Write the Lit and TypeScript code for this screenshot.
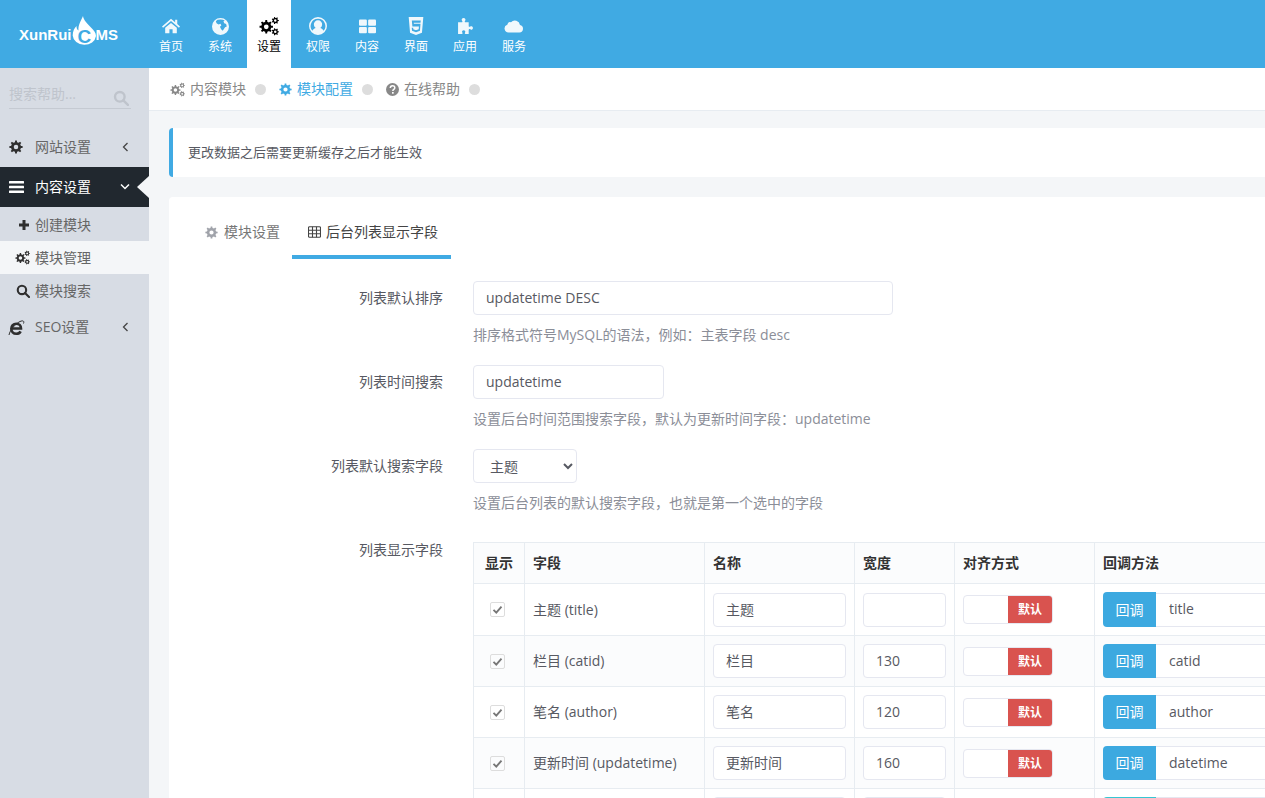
import { LitElement, html, css, svg } from 'lit';
import { customElement } from 'lit/decorators.js';

// builds a toothed wheel, used by the gear and cogs icons
function gear(cx: number, cy: number, R: number, r: number, hole: number, teeth: number) {
  let d = '';
  const step = (Math.PI * 2) / teeth;
  for (let i = 0; i < teeth; i++) {
    const a = i * step;
    const pts = [
      [r, a - step * 0.5],
      [r, a - step * 0.27],
      [R, a - step * 0.17],
      [R, a + step * 0.17],
      [r, a + step * 0.27],
    ];
    for (const [rad, an] of pts) {
      d += `${d ? 'L' : 'M'}${(cx + rad * Math.cos(an)).toFixed(2)} ${(cy + rad * Math.sin(an)).toFixed(2)}`;
    }
  }
  d += `Z M${cx - hole} ${cy}a${hole} ${hole} 0 1 0 ${hole * 2} 0a${hole} ${hole} 0 1 0 ${-hole * 2} 0Z`;
  return d;
}

const icon = (size: number, body: unknown, vb = '0 0 16 16') =>
  html`<svg class="ic" width=${size} height=${size} viewBox=${vb} fill="currentColor" fill-rule="evenodd">${body}</svg>`;

const cogs = (size: number) =>
  icon(size, svg`<path d=${gear(5.8, 8.6, 5.4, 4, 1.9, 8)} /><path d=${gear(13, 3.6, 2.9, 2.1, 1, 7)} /><path d=${gear(13, 12.6, 2.9, 2.1, 1, 7)} />`);
const cog = (size: number) => icon(size, svg`<path d=${gear(8, 8, 7.6, 5.7, 2.6, 8)} />`);

const navIcons: Record<string, () => unknown> = {
  home: () =>
    icon(18, svg`<path d="M8.5 1.6 12.4 5V2.6h2v4.1L17 9l-1 1.1-7.5-6.3L1 10.1 0 9zM3 10.2l5.500-4.600 5.500 4.600V15.400H10V11.500H7v3.900H3z" />`, '0 0 17 17'),
  globe: () =>
    icon(17, svg`<path d="M8 0a8 8 0 1 1 0 16A8 8 0 0 1 8 0zM5.200 1.700 3.600 3.100 4.300 5 6.200 6 8 5.400 8.800 7l-1.300 1.200 1.100 2.400 1.500 1.500L12.300 8.800 13.900 8 13.300 5.600 11.500 5 10.800 3 12 2.400A7 7 0 0 0 8 1.300z" />`),
  cogs: () => cogs(20),
  user: () =>
    icon(18, svg`<path d="M8 0a8 8 0 1 1 0 16A8 8 0 0 1 8 0zm0 1.500a6.500 6.500 0 0 0-5 10.700C3.600 10.700 5 10 6 9.700A3.700 3.700 0 1 1 10 9.700c1 .3 2.400 1 3 2.500A6.500 6.500 0 0 0 8 1.500z" />`),
  grid: () =>
    icon(17, svg`<rect x="0" y="1.500" width="7.400" height="5.800" rx="1" /><rect x="8.600" y="1.500" width="7.400" height="5.800" rx="1" /><rect x="0" y="8.500" width="7.400" height="5.800" rx="1" /><rect x="8.600" y="8.500" width="7.400" height="5.800" rx="1" />`),
  html5: () =>
    icon(18, svg`<path d="M1.500 0h13l-1.200 14L8 16l-5.300-2zM4.300 3l.5 5.400h5.800l-.2 2.500-2.400.8-2.400-.8-.1-1.300H4.200l.3 2.700 3.500 1.200 3.500-1.200.5-6.400H6.100L6 5.100h6l.2-2.100z" />`),
  puzzle: () =>
    icon(17, svg`<path d="M1 4H4.200C5.400 4 5.300 3 4.700 2.500 3.900 1.500 4.700 0 6.200 0S8.500 1.500 7.700 2.500C7.100 3 7 4 8.200 4H11V7.500C11 8.500 12 8.500 12.500 8 13.500 7.200 15 7.900 15 9.300S13.500 11.500 12.500 10.700C12 10.200 11 10.300 11 11.300V15H8C7.200 15 7.200 14.200 7.600 13.700 8.300 12.800 7.500 11.600 6.300 11.600S4.300 12.800 5 13.700C5.400 14.200 5.400 15 4.600 15H1z" />`),
  cloud: () =>
    icon(20, svg`<path d="M4.500 15.500A4 4 0 0 1 3.300 7.700 3 3 0 0 1 7 5.200 5.300 5.300 0 0 1 16 8a3.800 3.800 0 0 1-.5 7.500z" />`, '0 0 20 18'),
};

const nav = [
  ['首页', 'home'],
  ['系统', 'globe'],
  ['设置', 'cogs'],
  ['权限', 'user'],
  ['内容', 'grid'],
  ['界面', 'html5'],
  ['应用', 'puzzle'],
  ['服务', 'cloud'],
];

const searchIc = (size: number) =>
  html`<svg class="ic" width=${size} height=${size} viewBox="0 0 16 16" fill="none" stroke="currentColor" stroke-width="2.400"><circle cx="6.800" cy="6.800" r="4.800" /><path d="m10.300 10.300 4.600 4.600" stroke-linecap="round" /></svg>`;

// last row only shows its top edge in the viewport, so it carries no text
const rows = [
  ['主题 (title)', '主题', '', 'title', ''],
  ['栏目 (catid)', '栏目', '130', 'catid', ''],
  ['笔名 (author)', '笔名', '120', 'author', ''],
  ['更新时间 (updatetime)', '更新时间', '160', 'datetime', ''],
  ['', '', '', '', 'teal'],
];

@customElement('app-root')
export class AppRoot extends LitElement {
  static styles = css`
    :host {
      display: block;
      height: 798px;
      overflow: hidden;
      background: #f4f6f8;
      color: #575962;
      font-family: 'Open Sans', 'Noto Sans CJK SC', sans-serif;
      font-size: 14px;
      line-height: 20px;
    }
    .ic { display: block; flex: none; }
    .top { display: flex; height: 68px; background: #40aae3; color: #fff; }
    .logo {
      width: 149px;
      box-sizing: border-box;
      padding-left: 19px;
      display: flex;
      align-items: center;
      font: bold 15px 'Liberation Sans', Arial, sans-serif;
      color: #fff;
    }
    .logo svg { margin: -7px -1px 0 0; flex: none; }
    .logo text { font: bold 19px 'Liberation Sans', Arial, sans-serif; fill: #40aae3; }
    .nav { display: flex; gap: 5px; }
    .nav a {
      width: 44px;
      display: flex;
      flex-direction: column;
      align-items: center;
      font-size: 12px;
      color: #fff;
    }
    .nav a.on { background: #fff; color: #000; }
    .nav .slot { height: 20px; margin-top: 16px; display: flex; align-items: center; opacity: 0.92; }
    .nav a.on .slot { opacity: 1; }
    .nav .lb { margin-top: 1px; }

    .body { display: flex; height: 730px; }
    .side { width: 149px; flex: none; background: #d7dce4; color: #666; }
    .search {
      margin: 0 18px 0 9px;
      height: 41px;
      box-sizing: border-box;
      border-bottom: 1px solid #c5cad2;
      padding-top: 16px;
      display: flex;
      justify-content: space-between;
      color: #bfc4cc;
    }
    .search .ic { margin: 6px 2px 0 0; }
    .menu { margin-top: 18px; }
    .mi { display: flex; align-items: center; height: 40px; position: relative; }
    .mi .mic { width: 35px; padding-left: 9px; box-sizing: border-box; color: #2f2f2f; flex: none; }
    .mi .chev { position: absolute; left: 122px; top: 15px; }
    .mi .chev.down { top: 16px; left: 120px; }
    .mi .mic.ie { padding-left: 8px; }
    .mi.dark { background: #21282f; color: #fff; margin-bottom: 1px; }
    .mi.dark .mic { color: #fff; }
    .mi.dark::after {
      content: '';
      position: absolute;
      right: 0;
      top: 9px;
      border: 11px solid transparent;
      border-left: 0;
      border-right: 12px solid #f4f6f8;
    }
    .sub { display: flex; align-items: center; height: 33px; }
    .sub .mic { width: 35px; flex: none; display: flex; justify-content: flex-end; padding-right: 5px; box-sizing: border-box; color: #2f2f2f; }
    .sub.on { background: #f4f6f8; }

    .main { flex: 1; min-width: 0; overflow: hidden; }
    .crumbs {
      height: 42px;
      background: #fff;
      border-bottom: 1px solid #e7ecf1;
      display: flex;
      align-items: center;
      padding-left: 21px;
      color: #888;
    }
    .crumbs .it { display: flex; align-items: center; gap: 5px; }
    .crumbs .it.on { color: #40aae3; }
    .crumbs .dot { width: 11px; height: 11px; border-radius: 50%; background: #ddd; margin: 0 13px 0 9px; }
    .alert {
      margin: 17px 0 20px 20px;
      height: 49px;
      box-sizing: border-box;
      padding: 0 0 2px 15px;
      background: #fff;
      border-left: 4px solid #40aae3;
      border-radius: 4px 0 0 4px;
      display: flex;
      align-items: center;
      font-size: 13px;
    }
    .card { margin-left: 20px; background: #fff; border-radius: 4px 0 0 0; height: 640px; }
    .tabs { display: flex; height: 62px; padding-left: 20px; }
    .tab {
      display: flex;
      align-items: center;
      gap: 6px;
      padding: 8px 13px 0 16px;
      box-sizing: border-box;
      color: #777;
    }
    .tab:first-child { padding-right: 12px; }
    .tab:first-child .ic { color: #a0a3aa; }
    .tab.on { color: #444; border-bottom: 4px solid #40aae3; padding-top: 12px; height: 62px; gap: 5px; }
    .form { padding-top: 22px; }
    .row { display: flex; margin-bottom: 20px; }
    .row > label {
      width: 274px;
      flex: none;
      text-align: right;
      padding-top: 7px;
      color: #575962;
    }
    .fld { margin-left: 30px; flex: none; }
    input.txt {
      display: block;
      box-sizing: border-box;
      height: 34px;
      padding: 5px 12px 7px;
      border: 1px solid #e5e7f0;
      border-radius: 4px;
      font: inherit;
      color: #575962;
      background: #fff;
      outline: none;
    }
    input.w420 { width: 420px; }
    input.w191 { width: 191px; }
    input.w133 { width: 133px; }
    input.w83 { width: 83px; }
    select {
      display: block;
      box-sizing: border-box;
      width: 104px;
      height: 34px;
      padding: 6px 12px;
      border: 1px solid #e5e7f0;
      border-radius: 4px;
      font: inherit;
      color: #575962;
      background: #fff;
    }
    .help { margin-top: 10px; color: #8b8e98; }
    table {
      margin-top: 9px;
      border-collapse: collapse;
      table-layout: fixed;
      width: 1000px;
    }
    col.c1 { width: 51px; }
    col.c2 { width: 180px; }
    col.c3 { width: 150px; }
    col.c4 { width: 100px; }
    col.c5 { width: 140px; }
    th, td { border: 1px solid #e7ecf1; padding: 8px; text-align: left; vertical-align: middle; }
    th { height: 24px; background: #fbfcfd; font-weight: 700; color: #333; }
    td { height: 34px; color: #575962; }
    tbody tr:nth-child(even) td { background: #fbfcfd; }
    .cen { text-align: center; }
    .ck {
      display: block;
      box-sizing: border-box;
      width: 15px;
      height: 15px;
      margin-left: 8px;
      border: 1px solid #ddd;
      border-radius: 2px;
      color: #777;
    }
    .sw {
      display: flex;
      justify-content: flex-end;
      box-sizing: border-box;
      width: 90px;
      height: 29px;
      border: 1px solid #e5e7f0;
      border-radius: 4px;
      overflow: hidden;
      background: #fff;
    }
    .sw span {
      width: 44px;
      background: #d9534f;
      color: #fff;
      font-size: 12px;
      font-weight: 700;
      line-height: 27px;
      text-align: center;
    }
    .grp { display: flex; align-items: center; }
    .grp .btn {
      width: 53px;
      height: 34px;
      background: #3ca9e0;
      color: #fff;
      border-radius: 4px 0 0 4px;
      line-height: 34px;
      text-align: center;
      flex: none;
    }
    tbody tr:first-child .btn { height: 35px; line-height: 35px; }
    .grp .btn.teal { background: #36c6d3; }
    .grp input.txt { border-left: 0; border-radius: 0 4px 4px 0; width: 200px; padding-left: 13px; }
  `;

  render() {
    return html`
      <div class="top">
        <div class="logo">
          XunRui<svg width="25" height="30" viewBox="0 0 25 30">
            <path fill="#fff" d="M11 0C11.500 4 15 7 18 10.500 21.500 14 24 16.500 24 20A11.700 10 0 0 1 .7 19.500C.7 15 2.500 12 4.500 10 4.500 12 5 13.500 6.500 14.500 6 9 9 5 11 0Z" />
            <text x="5.500" y="26.500">C</text>
          </svg>MS
        </div>
        <div class="nav">
          ${nav.map(
            ([t, ic]) => html`<a class=${t === '设置' ? 'on' : ''}><span class="slot">${navIcons[ic]()}</span><span class="lb">${t}</span></a>`
          )}
        </div>
      </div>
      <div class="body">
        <div class="side">
          <div class="search"><span>搜索帮助...</span>${searchIc(16)}</div>
          <div class="menu">
            <div class="mi"><span class="mic">${cog(14)}</span>网站设置
              <svg class="ic chev" width="7" height="10" viewBox="0 0 7 10" fill="none" stroke="#444" stroke-width="1.300"><path d="M5.500 1 1.500 5l4 4" /></svg>
            </div>
            <div class="mi dark"><span class="mic">
              <svg class="ic" width="15" height="14" viewBox="0 0 15 14" fill="currentColor"><rect y="1" width="15" height="2.600" rx=".5" /><rect y="5.700" width="15" height="2.600" rx=".5" /><rect y="10.400" width="15" height="2.600" rx=".5" /></svg>
            </span>内容设置
              <svg class="ic chev down" width="10" height="8" viewBox="0 0 10 8" fill="none" stroke="#fff" stroke-width="1.500"><path d="m1 1.500 4 4 4-4" /></svg>
            </div>
            <div class="sub"><span class="mic">
              <svg class="ic" width="12" height="12" viewBox="0 0 12 12" fill="currentColor"><path d="M4.500 1h3v3.500H11v3H7.500V11h-3V7.500H1v-3h3.500z" /></svg>
            </span>创建模块</div>
            <div class="sub on"><span class="mic">${cogs(15)}</span>模块管理</div>
            <div class="sub"><span class="mic">${searchIc(14)}</span>模块搜索</div>
            <div class="mi"><span class="mic ie">
              <svg class="ic" width="17" height="17" viewBox="0 0 17 17" fill="none" stroke="currentColor"><path stroke-width="2.600" d="M3.500 9.500h9.500C13 6.500 11 4.800 8.300 4.800 5.300 4.800 3.300 7 3.300 9.800s2 5 5 5c2 0 3.500-.9 4.300-2.500" /><path stroke-width="1" d="M1 16c1-5 6-11 11-13.500 3-1.300 4.500-.5 3.500 2" /></svg>
            </span>SEO设置
              <svg class="ic chev" width="7" height="10" viewBox="0 0 7 10" fill="none" stroke="#444" stroke-width="1.300"><path d="M5.500 1 1.500 5l4 4" /></svg>
            </div>
          </div>
        </div>
        <div class="main">
          <div class="crumbs">
            <span class="it">${cogs(15)}内容模块</span><span class="dot"></span>
            <span class="it on">${cog(13)}模块配置</span><span class="dot"></span>
            <span class="it"><svg class="ic" width="13" height="13" viewBox="0 0 13 13"><circle cx="6.500" cy="6.500" r="6.500" fill="currentColor" /><path d="M4.300 5c0-3 4.500-3 4.500-.3 0 1.700-2 1.500-2 3.300" fill="none" stroke="#fff" stroke-width="1.500" /><rect x="6" y="9" width="1.700" height="1.700" fill="#fff" /></svg>在线帮助</span><span class="dot"></span>
          </div>
          <div class="alert">更改数据之后需要更新缓存之后才能生效</div>
          <div class="card">
            <div class="tabs">
              <div class="tab">${cog(13)}模块设置</div>
              <div class="tab on">
                <svg class="ic" width="13" height="12" viewBox="0 0 13 12" fill="none" stroke="currentColor" stroke-width="1.100"><rect x=".5" y=".8" width="12" height="10.400" rx="1" /><path d="M.5 4.200h12M.5 7.700h12M4.500 .8v10.400M8.500 .8v10.400" /></svg>
                后台列表显示字段
              </div>
            </div>
            <div class="form">
              <div class="row">
                <label>列表默认排序</label>
                <div class="fld">
                  <input class="txt w420" value="updatetime DESC" />
                  <div class="help">排序格式符号MySQL的语法，例如：主表字段 desc</div>
                </div>
              </div>
              <div class="row">
                <label>列表时间搜索</label>
                <div class="fld">
                  <input class="txt w191" value="updatetime" />
                  <div class="help">设置后台时间范围搜索字段，默认为更新时间字段：updatetime</div>
                </div>
              </div>
              <div class="row">
                <label>列表默认搜索字段</label>
                <div class="fld">
                  <select><option>主题</option></select>
                  <div class="help">设置后台列表的默认搜索字段，也就是第一个选中的字段</div>
                </div>
              </div>
              <div class="row">
                <label>列表显示字段</label>
                <div class="fld">
                  <table>
                    <colgroup>
                      <col class="c1" /><col class="c2" /><col class="c3" /><col class="c4" /><col class="c5" /><col />
                    </colgroup>
                    <thead>
                      <tr><th class="cen">显示</th><th>字段</th><th>名称</th><th>宽度</th><th>对齐方式</th><th>回调方法</th></tr>
                    </thead>
                    <tbody>
                      ${rows.map(
                        ([field, name, width, cb, tone]) => html`<tr>
                          <td><span class="ck"><svg class="ic" width="13" height="13" viewBox="0 0 13 13" fill="none" stroke="currentColor" stroke-width="1.900"><path d="m2.500 6.800 2.800 2.800 5.200-6" /></svg></span></td>
                          <td>${field}</td>
                          <td><input class="txt w133" value=${name} /></td>
                          <td><input class="txt w83" value=${width} /></td>
                          <td><div class="sw"><span>${field ? '默认' : ''}</span></div></td>
                          <td><div class="grp"><span class="btn ${tone}">${field ? '回调' : ''}</span><input class="txt" value=${cb} /></div></td>
                        </tr>`
                      )}
                    </tbody>
                  </table>
                </div>
              </div>
            </div>
          </div>
        </div>
      </div>
    `;
  }
}
